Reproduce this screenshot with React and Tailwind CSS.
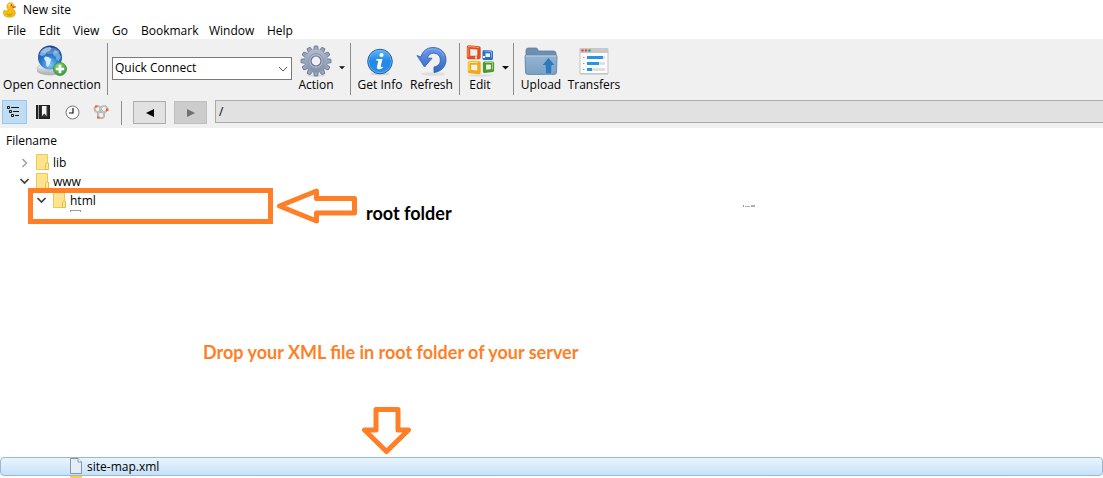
import { useState } from 'react'

const menus = [
  { label: 'File',     width: 'w-8' },
  { label: 'Edit',     width: 'w-[34px]' },
  { label: 'View',     width: 'w-[39px]' },
  { label: 'Go',       width: 'w-[29px]' },
  { label: 'Bookmark', width: 'w-[68px]' },
  { label: 'Window',   width: 'w-[58px]' },
  { label: 'Help',     width: 'w-10' },
]

function DuckIcon() {
  return (
    <svg width="14" height="16" viewBox="0 0 14 16" aria-hidden="true">
      <path d="M1 8.200 3.200 9 5.500 8C4 6.700 3.600 4.800 4 3.400 4.500 1.200 6.300.4 8 .7c2 .3 3 1.800 2.800 3.600-.1 1.400-.9 2.200-.7 3 1.500.8 2.500 2.300 2.200 4.300-.4 2.500-2.700 3.700-5.700 3.700C2.600 15.300.6 13.600.5 11.300.4 10 .5 9 1 8.200Z" fill="#f5bd13" stroke="#d89b0b" strokeWidth=".6" />
      <path d="M5 3.200C5.500 1.800 7 1.300 8.300 1.600L6 5Z" fill="#ffdf55" />
      <path d="M3 11c1.600 1.700 5 1.500 6.500-.6-.2 2.400-1.700 3.400-3.500 3.300C4.500 13.600 3.400 12.500 3 11Z" fill="#d99a0a" />
      <path d="m9 4.500 4-.2c.4.900-1.300 2-3.600 1.800Z" fill="#ef4a1f" />
      <circle cx="8.300" cy="3.300" r=".7" fill="#5b3b00" />
    </svg>
  )
}

function GlobeIcon() {
  return (
    <svg width="32" height="32" viewBox="0 0 32 32" aria-hidden="true">
      <defs>
        <radialGradient id="globe" cx=".5" cy=".8" r=".8">
          <stop offset="0" stopColor="#7fcbf8" />
          <stop offset=".45" stopColor="#2c7dd2" />
          <stop offset="1" stopColor="#163f8c" />
        </radialGradient>
        <linearGradient id="disc" x1="0" y1="0" x2="0" y2="1">
          <stop offset="0" stopColor="#fdfdfd" />
          <stop offset="1" stopColor="#b0b2b5" />
        </linearGradient>
        <radialGradient id="plus" cx=".4" cy=".3" r=".8">
          <stop offset="0" stopColor="#8edb72" />
          <stop offset="1" stopColor="#2f8f2f" />
        </radialGradient>
      </defs>
      <ellipse cx="14" cy="25.500" rx="13" ry="5" fill="#b4b6b8" />
      <ellipse cx="14" cy="23.500" rx="13" ry="5.500" fill="url(#disc)" stroke="#b4b6b8" strokeWidth=".6" />
      <circle cx="14" cy="12.500" r="12" fill="url(#globe)" />
      <path d="M7 4.500c2-1.800 4-2.500 7-2.500l1.500 1.500-2 2.500-2.500.8L9 10l-3 1-2.500-1C4 7.500 5.200 6 7 4.500Z" fill="#9cc6ec" opacity=".75" />
      <path d="m9 11.500 3.500.5 3 2.500-1.500 3.500-2 4-1.500-1-.5-4L8 13.500Z" fill="#e6f4fd" opacity=".9" />
      <path d="m19 5 3.500 2L25 12l-2.500 4-2-1-.5-3-3-2 .5-3Z" fill="#8dc1ec" opacity=".7" />
      <path d="M4 7C7 1.500 20 .5 24 7 19 10 9 9 4 7Z" fill="#fff" opacity=".25" />
      <circle cx="24" cy="24" r="6.500" fill="url(#plus)" stroke="#3c8a3c" strokeWidth=".8" />
      <path d="M24 19.800v8.400M19.800 24h8.400" stroke="#fff" strokeWidth="2.600" />
    </svg>
  )
}

function GearIcon() {
  const teeth = [0, 30, 60, 90, 120, 150, 180, 210, 240, 270, 300, 330]
  return (
    <svg width="32" height="32" viewBox="0 0 32 32" aria-hidden="true">
      <defs>
        <linearGradient id="gear" x1="0" y1="0" x2="0" y2="1">
          <stop offset="0" stopColor="#b0bccf" />
          <stop offset="1" stopColor="#8291ac" />
        </linearGradient>
      </defs>
      <ellipse cx="16" cy="30.500" rx="10" ry="1.200" fill="#dadada" />
      <g fill="#97a5bd" stroke="#65728a" strokeWidth=".8" strokeLinejoin="round">
        {teeth.map(a => (
          <path key={a} d="M13.500 6 14.300 1h3.400l.8 5Z" transform={`rotate(${a} 16 16)`} />
        ))}
      </g>
      <circle cx="16" cy="16" r="11.400" fill="url(#gear)" />
      <circle cx="16" cy="16" r="7.300" fill="#b3bfd3" stroke="#8491a9" strokeWidth="1" />
      <circle cx="16" cy="16" r="5" fill="#f0f0f0" stroke="#65728a" strokeWidth="1.200" />
    </svg>
  )
}

function InfoIcon() {
  return (
    <svg width="32" height="32" viewBox="0 0 32 32" aria-hidden="true">
      <defs>
        <linearGradient id="info" x1="0" y1="0" x2="0" y2="1">
          <stop offset="0" stopColor="#5fb4f6" />
          <stop offset=".5" stopColor="#2488e5" />
          <stop offset="1" stopColor="#2c8eea" />
        </linearGradient>
      </defs>
      <ellipse cx="16" cy="29" rx="10" ry="1.500" fill="#d4d4d4" />
      <circle cx="16" cy="16.500" r="12.300" fill="url(#info)" stroke="#2a5f9e" strokeWidth="1" />
      <circle cx="16" cy="16.500" r="11.300" fill="none" stroke="#6fbaf5" strokeWidth=".7" />
      <circle cx="17.500" cy="10" r="2.100" fill="#fff" />
      <path d="M12.500 14h6L16.700 21.300c-.2.900.6.900 2 .1v1.300c-3 2.300-6.500 2-5.700-1.200l1.300-5.700h-2Z" fill="#fff" />
    </svg>
  )
}

function RefreshIcon() {
  return (
    <svg width="32" height="32" viewBox="0 0 32 32" aria-hidden="true">
      <defs>
        <linearGradient id="refresh" x1="0" y1="0" x2="0" y2="1">
          <stop offset="0" stopColor="#6b9ae6" />
          <stop offset="1" stopColor="#3268c6" />
        </linearGradient>
      </defs>
      <ellipse cx="17" cy="29" rx="12" ry="1.800" fill="#dedede" />
      <path d="M5 12C6.500 6 11 2.500 17 2.500c7.500 0 13 5 13 12.300 0 6.700-4.500 11.700-12 12.700v-5.500c4-.8 6.300-3.300 6.300-7 0-4.200-2.800-6.800-6.800-6.800-3.200 0-5.500 2-6 5h4.500L8.500 22 1 10.500Z" fill="url(#refresh)" stroke="#2a5caf" strokeWidth=".8" strokeLinejoin="round" />
      <path d="M7.500 9C9.500 5.500 13 4 17 4c5.500 0 9.500 3 11 7.500" fill="none" stroke="#93b8f2" strokeWidth="1" opacity=".7" />
    </svg>
  )
}

function OfficeIcon() {
  return (
    <svg width="30" height="32" viewBox="0 0 30 32" aria-hidden="true" fill="none">
      <ellipse cx="15" cy="30.500" rx="12" ry="1" fill="#dcdcdc" />
      <g strokeLinejoin="round">
        <path d="M3.500 2 14 3v9.500L3.500 12.500Z" stroke="#e04f1c" strokeWidth="3.400" />
        <path d="m3 1.500 11 1M3 2.500v9.500" stroke="#f79a66" strokeWidth="1" />
        <path d="M19 6.500 26.500 7v6.500H19Z" stroke="#2a6cc2" strokeWidth="3" />
        <path d="m19 6 7.500.6v6" stroke="#7ab4ec" strokeWidth="1" />
        <path d="M4.500 18H14v9.500l-9.500-1Z" stroke="#f0ab12" strokeWidth="3.400" />
        <path d="M13 17.500H4v8.500" stroke="#ffe06a" strokeWidth="1" />
        <path d="M19.500 18H27.500v7.500l-8 1Z" stroke="#4a9b2a" strokeWidth="3.200" />
        <path d="M20 17.500h7.500v7" stroke="#a2d372" strokeWidth="1" />
      </g>
      <path d="M10 11.500h2v2h-2ZM18 11h2v2h-2Z" fill="#f7f7f7" />
    </svg>
  )
}

function UploadIcon() {
  return (
    <svg width="34" height="32" viewBox="0 0 34 32" aria-hidden="true">
      <defs>
        <linearGradient id="upload" x1="0" y1="0" x2="0" y2="1">
          <stop offset="0" stopColor="#94b5d2" />
          <stop offset="1" stopColor="#7ba0c1" />
        </linearGradient>
      </defs>
      <path d="M2 28V5.500Q2 3 4.500 3H12q1.500 0 2 2l.5 1H29.500Q32 6 32 8.500V28Z" fill="#6b90b2" stroke="#5a7b99" strokeWidth=".8" />
      <path d="M1 11.500Q1 10 2.500 10h29Q33 10 33 11.500L32.500 27q0 2.500-2.500 2.500H4Q1.500 29.500 1.500 27Z" fill="url(#upload)" stroke="#5f84a6" strokeWidth=".8" />
      <path d="M2 11h30" stroke="#b7cfe3" strokeWidth="1" />
      <path d="m24.500 12.500 7 8h-3.700v8.500h-6.500v-8.500h-3.700Z" fill="#3079bf" stroke="#86b6e0" strokeWidth=".8" />
    </svg>
  )
}

function TransfersIcon() {
  return (
    <svg width="32" height="32" viewBox="0 0 32 32" aria-hidden="true">
      <path d="M2 29h28" stroke="#d0d0d0" strokeWidth="1.500" />
      <path d="M2 3.500h28v25H2Z" fill="#fbfbfb" stroke="#c4c4c4" />
      <path d="M2 3h28v5H2Z" fill="#c6c8ca" />
      <g>
        <circle cx="4.500" cy="5.500" r="1.300" fill="#ef4c45" />
        <circle cx="8" cy="5.500" r="1.300" fill="#ef4c45" />
        <circle cx="11.500" cy="5.500" r="1.300" fill="#37a45a" />
      </g>
      <path d="M5 12.500h1.500M5 18.500h1.500M5 24.500h1.500" stroke="#999" strokeWidth="1.200" />
      <path d="M9 12.500h18M9 18.500h18M9 24.500h18" stroke="#dcdcdc" strokeWidth="2.600" />
      <path d="M9 12.500h16M9 18.500h12M9 24.500h5" stroke="#2794e8" strokeWidth="2.800" />
    </svg>
  )
}

function OutlineIcon() {
  return (
    <svg width="14" height="14" viewBox="0 0 14 14" fill="none" stroke="#111" aria-hidden="true">
      <path d="M.5 1.500h2v2h-2ZM2.500 5.500h2v2h-2ZM4.500 9.500h2v2h-2Z" />
      <path d="M4 2.500h8M6 6.500h6M8 10.500h4" />
    </svg>
  )
}

function BookIcon() {
  return (
    <svg width="14" height="14" viewBox="0 0 14 14" aria-hidden="true">
      <path d="M0 0h14v14H0Z" fill="#222" />
      <path d="M2.500 0v14" stroke="#999" />
      <path d="M5 1h7v11H5Z" fill="#333" />
      <path d="M6 1h4.500v10L8.250 8.500 6 11Z" fill="#f4f4f4" />
    </svg>
  )
}

function ClockIcon() {
  return (
    <svg width="15" height="15" viewBox="0 0 15 15" aria-hidden="true">
      <circle cx="7.500" cy="7.500" r="6.500" fill="#fcfcfc" stroke="#777" />
      <path d="M8 3v5H4" fill="none" stroke="#111" strokeWidth="1.200" />
    </svg>
  )
}

function BonjourIcon() {
  return (
    <svg width="16" height="16" viewBox="0 0 16 16" fill="none" aria-hidden="true">
      <g stroke="#999" strokeWidth="1.700">
        <circle cx="4.500" cy="5" r="3" />
        <circle cx="11" cy="5" r="3" />
        <circle cx="8" cy="11" r="3.200" />
      </g>
      <g stroke="#e9e9e9" strokeWidth=".6">
        <circle cx="4.500" cy="5" r="3" />
        <circle cx="11" cy="5" r="3" />
        <circle cx="8" cy="11" r="3.200" />
      </g>
      <path d="M2 1.500h2.500v2H2ZM13 4.500h2.500v2.500H13ZM4 12.500h2.500v2H4Z" fill="#f26a21" />
    </svg>
  )
}

function FolderIcon() {
  return (
    <svg width="14" height="16" viewBox="0 0 14 16" className="shrink-0" aria-hidden="true">
      <path d="M.5.5h11v15H.5Z" fill="#ffe391" stroke="#eec94f" />
      <path d="M9.500 15.500v-5l1-1.500h2v6.500Z" fill="#ffe9a6" stroke="#e6bd3c" />
    </svg>
  )
}

function FileIcon() {
  return (
    <svg width="12" height="16" viewBox="0 0 12 16" className="shrink-0" aria-hidden="true">
      <path d="M.5.500H8L11.500 4v11.500H.5Z" fill="#e3eef7" stroke="#8496a8" />
      <path d="M8 .5V4h3.500" fill="#fff" stroke="#8496a8" />
    </svg>
  )
}

function Chevron({ open }) {
  return (
    <svg width="11" height="10" viewBox="0 0 11 10" fill="none" className="shrink-0" aria-hidden="true">
      {open
        ? <path d="m1.500 2 4 4 4-4" stroke="#404040" strokeWidth="1.700" />
        : <path d="m3.500 1 4 4-4 4" stroke="#a0a0a0" strokeWidth="1.500" />}
    </svg>
  )
}

function Divider({ className }) {
  return <div className={`w-px bg-[#8c8c8c] ${className}`} />
}

function ToolButton({ label, icon, className }) {
  return (
    <button type="button" className={`flex flex-col items-center whitespace-nowrap ${className}`}>
      {icon}
      <span className="leading-4">{label}</span>
    </button>
  )
}

function MenuCaret({ label, className }) {
  return (
    <button type="button" aria-label={label} className={`flex items-center ${className}`}>
      <svg width="7" height="4" viewBox="0 0 7 4" aria-hidden="true"><path d="M0 0h7L3.500 3.500Z" fill="#111" /></svg>
    </button>
  )
}

export default function App() {
  const [path, setPath] = useState('/')

  return (
    <div className="bg-white text-black text-[12px] leading-4 font-['Open_Sans',sans-serif] overflow-hidden">
      {/* Title bar */}
      <header className="h-5 pl-[3px] flex items-center gap-[6px]">
        <DuckIcon />
        <h1>New site</h1>
      </header>

      {/* Menu bar */}
      <nav className="h-[19px] pl-[7px] flex items-center pt-[2px]">
        {menus.map(m => (
          <button key={m.label} type="button" className={`text-left whitespace-nowrap ${m.width}`}>{m.label}</button>
        ))}
      </nav>

      {/* Main toolbar */}
      <div className="h-[58px] bg-[#f0f0f0] flex items-start pt-1">
        <ToolButton label="Open Connection" icon={<GlobeIcon />} className="w-[104px] pt-[2px]" />
        <Divider className="ml-[3px] h-[52px]" />
        <div className="relative ml-1 mt-[14px]">
          <select aria-label="Quick Connect" className="appearance-none block w-[180px] h-[23px] pl-[2px] pb-[2px] border border-[#7a7a7a] bg-white">
            <option>Quick Connect</option>
          </select>
          <svg width="10" height="6" viewBox="0 0 10 6" fill="none" className="absolute right-1 top-[9px] pointer-events-none" aria-hidden="true">
            <path d="m1 1 4 4 4-4" stroke="#555" />
          </svg>
        </div>
        <ToolButton label="Action" icon={<GearIcon />} className="ml-px w-[46px] pt-[2px]" />
        <MenuCaret label="Action menu" className="w-[6px] h-[50px]" />
        <Divider className="ml-[5px] h-[52px]" />
        <ToolButton label="Get Info" icon={<InfoIcon />} className="w-[58px] pt-[2px]" />
        <ToolButton label="Refresh" icon={<RefreshIcon />} className="w-[45px] pt-[2px]" />
        <Divider className="ml-[5px] h-[52px]" />
        <ToolButton label="Edit" icon={<OfficeIcon />} className="w-10 pt-[2px]" />
        <MenuCaret label="Edit menu" className="ml-[2px] w-[7px] h-[50px]" />
        <Divider className="ml-1 h-[52px]" />
        <ToolButton label="Upload" icon={<UploadIcon />} className="w-[54px] pt-[2px]" />
        <ToolButton label="Transfers" icon={<TransfersIcon />} className="w-[52px] pt-[2px]" />
      </div>

      {/* View switcher and path */}
      <div className="h-[31px] bg-[#f0f0f0] flex items-start pt-[3px] pl-[2px]">
        <button type="button" aria-label="Outline" className="w-[25px] h-6 pr-[2px] flex items-center justify-center bg-[#c0dcf3] border border-[#90c8f6]">
          <OutlineIcon />
        </button>
        <button type="button" aria-label="Bookmarks" className="ml-1 w-6 h-6 flex items-center justify-center"><BookIcon /></button>
        <button type="button" aria-label="History" className="ml-[5px] w-6 h-6 flex items-center justify-center"><ClockIcon /></button>
        <button type="button" aria-label="Bonjour" className="ml-[5px] w-6 h-6 flex items-center justify-center"><BonjourIcon /></button>
        <Divider className="ml-2 mt-px h-6" />
        <button type="button" aria-label="Back" className="ml-[11px] mt-px w-[33px] h-[23px] flex items-center justify-center bg-[#e1e1e1] border border-[#adadad]">
          <svg width="8" height="8" viewBox="0 0 8 8" aria-hidden="true"><path d="M8 0v8L0 4Z" fill="#000" /></svg>
        </button>
        <button type="button" disabled aria-label="Forward" className="ml-2 mt-px w-[33px] h-[23px] flex items-center justify-center bg-[#cccccc] border border-[#bfbfbf]">
          <svg width="8" height="8" viewBox="0 0 8 8" aria-hidden="true"><path d="M0 0v8l8-4Z" fill="#707070" /></svg>
        </button>
        <input aria-label="Path" value={path} onChange={e => setPath(e.target.value)}
          className="ml-2 flex-1 min-w-0 h-[23px] pl-[3px] bg-[#e1e1e1] border border-r-0 border-[#a9a9a9]" />
      </div>

      {/* File tree */}
      <main>
        <h2 className="h-[25px] pl-[6px] flex items-center">Filename</h2>
        <ul>
          <li className="h-[19px] pl-[19px] flex items-center">
            <Chevron />
            <span className="ml-[6px] mr-[3px] pb-[2px] flex"><FolderIcon /></span>
            lib
          </li>
          <li>
            <div className="h-[19px] pl-[19px] flex items-center">
              <Chevron open />
              <span className="ml-[6px] mr-[3px] pb-[2px] flex"><FolderIcon /></span>
              www
            </div>
            <div className="-mt-[3px] pl-7 flex items-start">
              <div className="w-[245px] h-9 border-5 border-[#ff7f27] bg-white">
                <div className="h-4 pl-[3px] flex items-center overflow-hidden">
                  <Chevron open />
                  <span className="ml-[6px] mr-[3px] pb-[2px] flex"><FolderIcon /></span>
                  html
                </div>
                <div className="ml-[37px] mt-px w-[11px] h-[2px] border border-b-0 border-[#9a9a9a]" />
              </div>
              <svg width="82" height="36" viewBox="0 0 82 36" fill="none" className="ml-[3px] shrink-0" aria-hidden="true">
                <path d="M3.500 18 40.500 3v7.500H78.500v14.500H40.500V33Z" stroke="#ff7f27" strokeWidth="5" strokeLinejoin="round" />
              </svg>
              <strong className="ml-2 mt-[15px] w-[377px] text-[18px] leading-5 font-bold font-['Lato',sans-serif]">root folder</strong>
              <div className="mt-[17px] h-[2px] flex gap-px" aria-hidden="true">
                <div className="w-px bg-[#999999]" />
                <div className="w-[5px] h-px mt-px bg-[#b0b0b0]" />
                <div className="w-1 bg-[#b0b0b0]" />
              </div>
            </div>
          </li>
        </ul>

        <p className="mt-[118px] ml-[203px] text-[18px] leading-5 font-bold text-[#ff7f27] font-['Lato',sans-serif]">
          Drop your XML file in root folder of your server
        </p>
        <svg width="50" height="48" viewBox="0 0 50 48" fill="none" className="mt-[45px] ml-[361px]" aria-hidden="true">
          <path d="M15 2.500H37V23H47.500L25.500 44.500 3.500 23H15Z" stroke="#ff7f27" strokeWidth="5" strokeLinejoin="round" />
        </svg>

        <div className="mt-[2px] h-[19px] pl-[69px] flex items-center gap-[5px] rounded-sm border border-[#97b9d4] bg-linear-to-b from-[#e9f4fd] to-[#c7e2f9]">
          <span className="pb-px"><FileIcon /></span>
          <span>site-map.xml</span>
        </div>
        <div className="ml-[70px] w-3 h-[2px] bg-[#f7cf4d]" />
      </main>
    </div>
  )
}
